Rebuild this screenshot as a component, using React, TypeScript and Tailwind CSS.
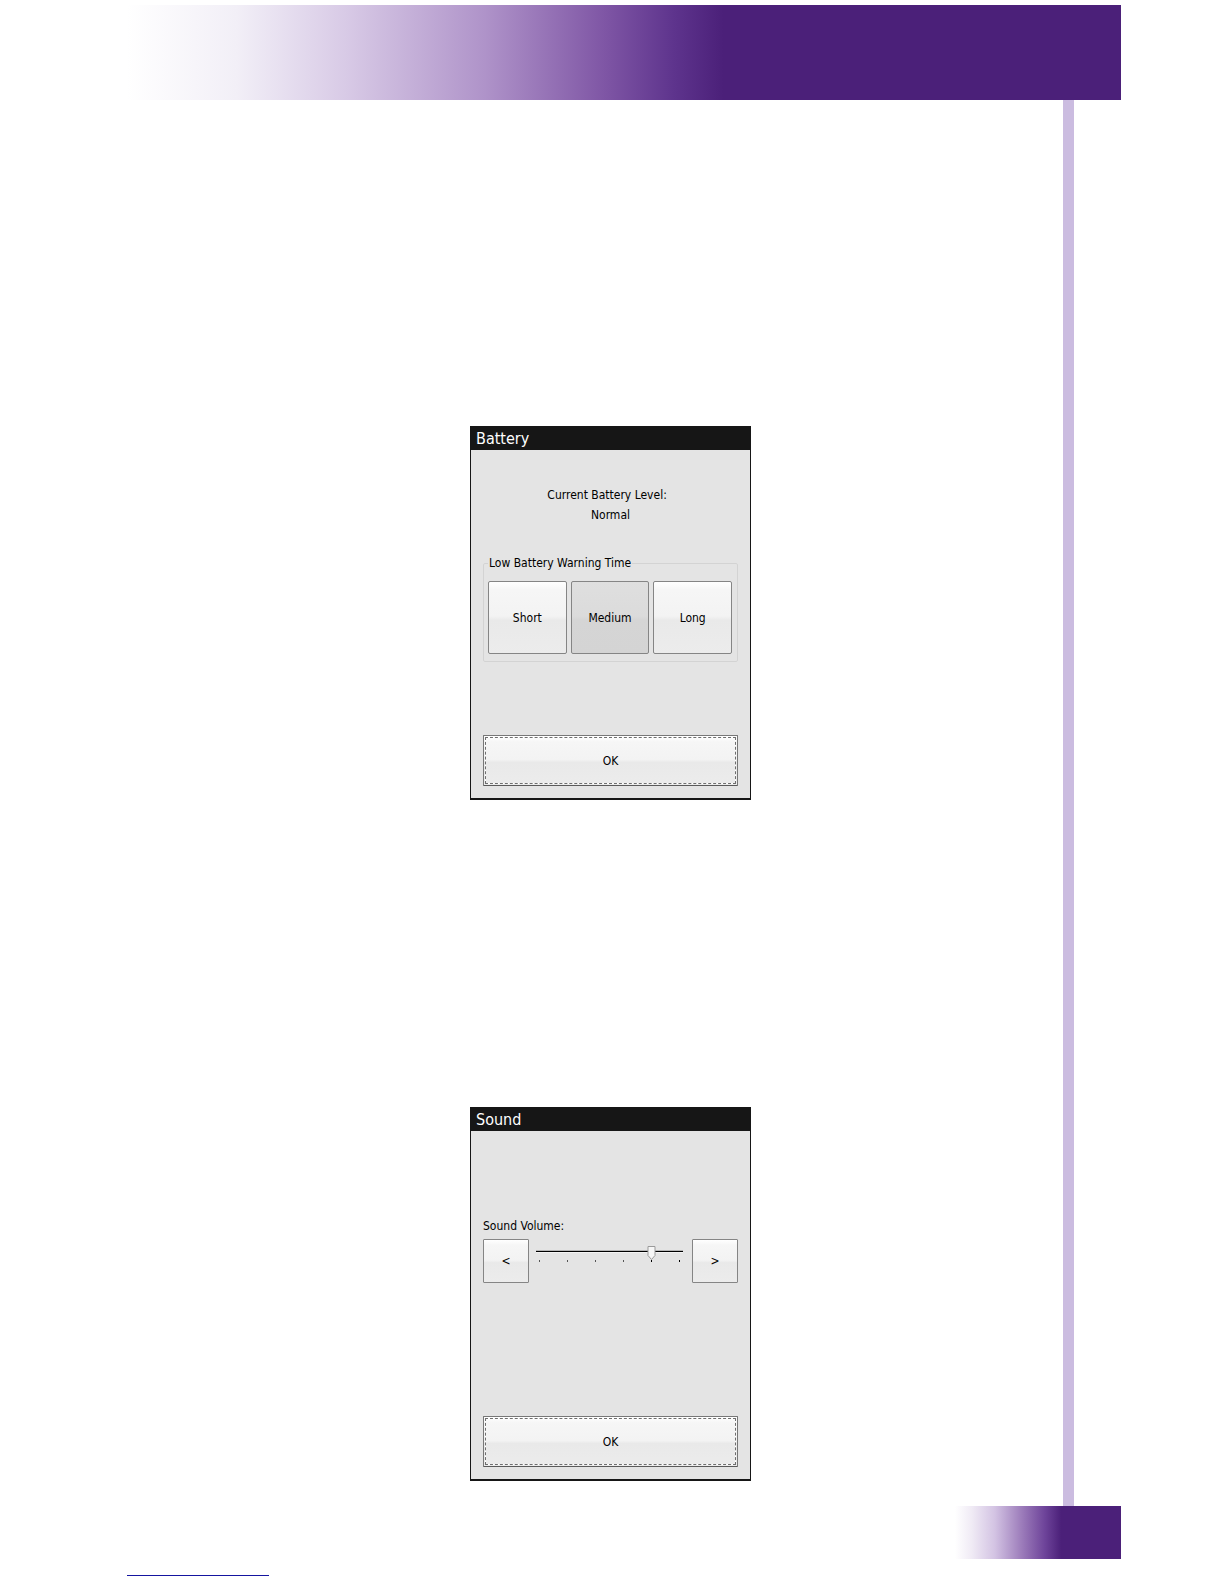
import { useState } from 'react'
import type { ReactNode } from 'react'
import clsx from 'clsx'

const WARNING_TIMES = ['Short', 'Medium', 'Long'] as const
const TICKS = [0, 1, 2, 3, 4, 5]

// Distance between two slider ticks, and where the first one sits
const TICK_STEP = 28
const TICK_START = 4

const raised = 'bg-linear-[180deg,#ffffff_0%,#f6f6f6_12%,#f3f3f3_48%,#e9e9e9_54%,#ececec_100%]'
const pressed = 'bg-linear-[180deg,#dfdfdf_0%,#dbdbdb_48%,#d5d5d5_54%,#d4d4d4_100%]'

interface DialogProps {
    title: string
    children: ReactNode
}

function Dialog({ title, children }: DialogProps) {
    return (
        <section className="flex h-[374px] w-[281px] flex-col border border-b-2 border-[#161616] bg-[#e4e4e4] text-[12px] leading-5 text-black">
            <h2 className="bg-[#161616] px-[5px] pt-px text-[16px] leading-[22px] text-white">{title}</h2>
            <div className="flex flex-1 flex-col px-3 pb-3">
                {children}
                <OkButton />
            </div>
        </section>
    )
}

function OkButton() {
    return (
        <button
            type="button"
            className={clsx('mt-auto flex h-[51px] w-full rounded-[1px] border border-[#777777] border-b-[#5a5a5a] p-px', raised)}
        >
            <span className="flex h-full flex-1 items-center justify-center border border-white outline-1 -outline-offset-1 outline-dashed outline-[#6f6f6f]">
                OK
            </span>
        </button>
    )
}

function BatteryDialog() {
    const [time, setTime] = useState<string>('Medium')

    return (
        <Dialog title="Battery">
            <div className="pt-[35px] text-center">
                <p>Current Battery Level:&nbsp;&nbsp;</p>
                <p>Normal</p>
            </div>
            <fieldset className="mt-7 rounded-[2px] border border-[#d3d3d3] pr-[5px] pb-[7px] pl-1">
                <legend className="px-px">Low Battery Warning Time</legend>
                <div className="flex gap-1 pt-2">
                    {WARNING_TIMES.map((t) => (
                        <button
                            key={t}
                            type="button"
                            aria-pressed={time === t}
                            onClick={() => setTime(t)}
                            className={clsx(
                                'h-[73px] flex-1 rounded-[2px] border border-[#858585]',
                                time === t ? pressed : raised,
                            )}
                        >
                            {t}
                        </button>
                    ))}
                </div>
            </fieldset>
        </Dialog>
    )
}

function VolumeSlider({ value, onChange }: { value: number; onChange: (v: number) => void }) {
    const x = TICK_START + value * TICK_STEP
    return (
        <div className="relative h-6 w-[150px]">
            <svg viewBox="0 0 150 24" className="block h-6 w-[150px]" aria-hidden="true">
                <rect x="0" y="7" width="147" height="1" fill="#000" />
                <rect x="0" y="6" width="147" height="1" fill="#000" opacity="0.2" />
                <rect x="0" y="8" width="147" height="1" fill="#fff" opacity="0.6" />
                {TICKS.map((t) => (
                    <rect
                        key={t}
                        x={TICK_START + t * TICK_STEP - 1}
                        y="16"
                        width="1"
                        height="2"
                        fill={t < 4 ? '#555' : '#000'}
                    />
                ))}
                <path
                    d={`M${x - 4} 2.5h7v9l-3.5 4l-3.5 -4z`}
                    fill="#f6f6f6"
                    stroke="#9a9a9a"
                    strokeWidth="1"
                />
            </svg>
            <input
                id="volume"
                type="range"
                min={0}
                max={5}
                value={value}
                onChange={(e) => onChange(Number(e.target.value))}
                className="absolute inset-0 m-0 h-full w-full cursor-pointer opacity-0"
            />
        </div>
    )
}

function SoundDialog() {
    const [volume, setVolume] = useState(4)
    const stepBtn = clsx('h-11 w-[46px] rounded-[1px] border border-[#858585]', raised)

    return (
        <Dialog title="Sound">
            <label htmlFor="volume" className="pt-[85px]">Sound Volume:</label>
            <div className="mt-[3px] flex justify-between">
                <button type="button" className={stepBtn} onClick={() => setVolume(Math.max(0, volume - 1))}>
                    &lt;
                </button>
                <div className="pt-[5px]">
                    <VolumeSlider value={volume} onChange={setVolume} />
                </div>
                <button type="button" className={stepBtn} onClick={() => setVolume(Math.min(5, volume + 1))}>
                    &gt;
                </button>
            </div>
        </Dialog>
    )
}

export default function App() {
    return (
        <div className="bg-white pt-[5px] pr-[103px] pb-2 pl-[127px] font-['DejaVu_Sans_Condensed','DejaVu_Sans',sans-serif]">
            <header className="h-[95px] bg-linear-[90deg,#ffffff_0%,#f2eff7_11%,#d8cae6_22%,#af93c9_36%,#7f56a5_48%,#5e348d_55%,#4b2079_60%]" />
            <div className="mr-[47px] border-r-[11px] border-[#cbbce0]">
                <main className="flex flex-col items-center gap-[307px] pt-[326px] pb-[25px] pl-[31px]">
                    <BatteryDialog />
                    <SoundDialog />
                </main>
            </div>
            <footer>
                <div className="ml-auto h-[53px] w-[166px] bg-linear-[90deg,#ffffff_0%,#f0ebf5_10%,#d3c3e3_24%,#9d7dbb_40%,#6e449a_54%,#4b2079_64%]" />
                <hr className="mt-4 w-[142px] border-t border-[#1515a0]" />
            </footer>
        </div>
    )
}
